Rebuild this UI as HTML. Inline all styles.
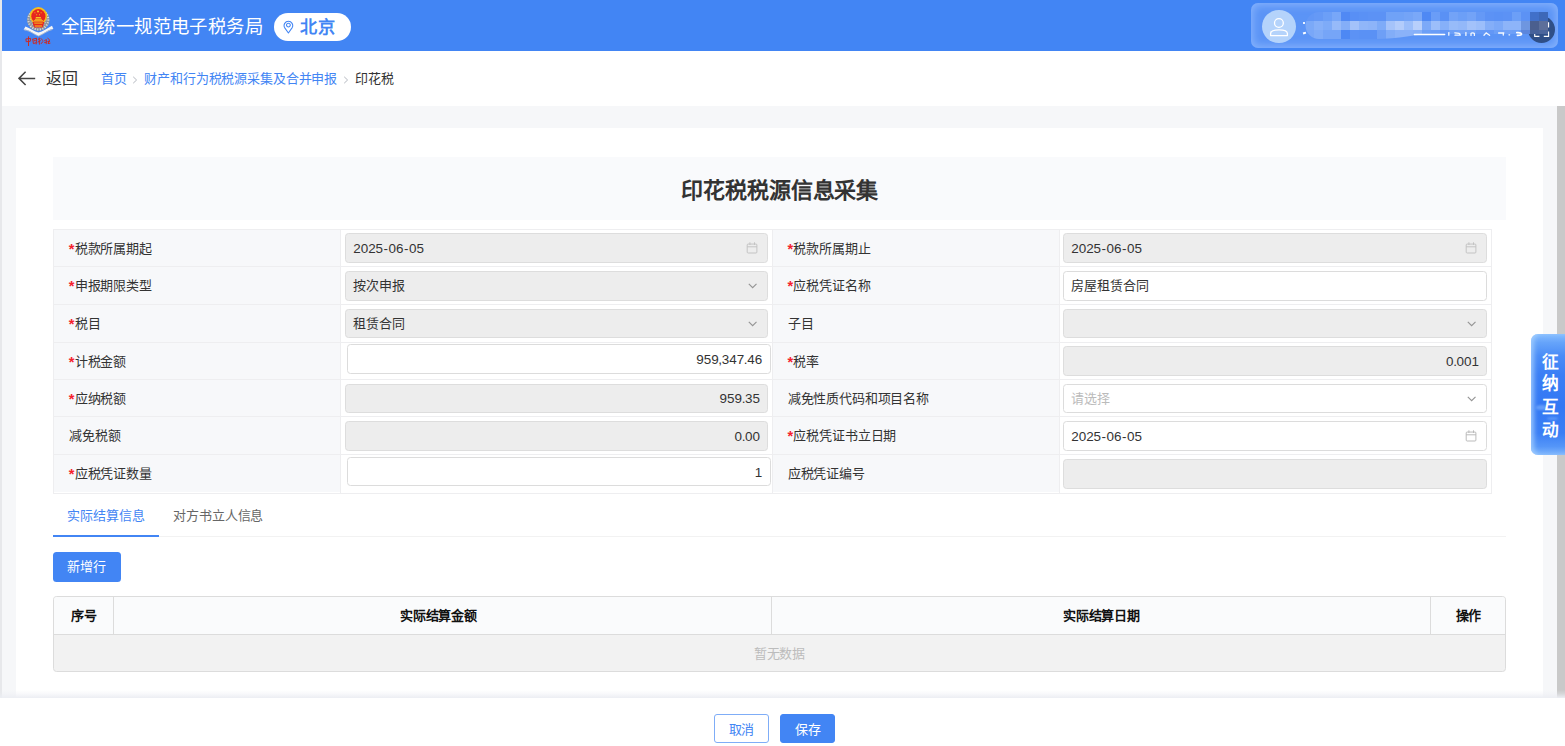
<!DOCTYPE html>
<html lang="zh-CN">
<head>
<meta charset="utf-8">
<title>印花税税源信息采集</title>
<style>
*{box-sizing:border-box;margin:0;padding:0}
html,body{width:1565px;height:746px;overflow:hidden;background:#f6f7f9;font-family:"Liberation Sans",sans-serif;color:#333;font-size:13px;letter-spacing:-.15px}
.abs{position:absolute}
#hdr{position:absolute;left:0;top:0;width:1565px;height:51px;background:#4285f4}
#lstrip{position:absolute;left:0;top:0;width:2px;height:746px;background:#e7e8eb;z-index:5}
#sitename{position:absolute;left:60.7px;top:15.2px;height:24px;line-height:24px;font-size:18.4px;letter-spacing:.4px;color:#fff;white-space:nowrap}
#pill{position:absolute;left:273.6px;top:12.9px;width:77.4px;height:28.2px;border-radius:14.1px;background:#fff}
#pill span{position:absolute;left:26.6px;top:3.3px;line-height:23px;font-size:17.2px;letter-spacing:1.1px;font-weight:bold;color:#4285f4;white-space:nowrap}
#ubox{position:absolute;left:1251px;top:3px;width:307px;height:45px;border-radius:7px;background:#5b94f6;box-shadow:inset 0 0 9px 2px rgba(150,190,255,.75)}
#avatar{position:absolute;left:1262px;top:9.6px;width:34px;height:33.3px;border-radius:50%;background:#b4d3fb}
#dark{position:absolute;left:1528px;top:15.8px;width:27px;height:27px;border-radius:50%;background:#2f4f87}
#bar{position:absolute;left:0;top:51px;width:1565px;height:55px;background:#fff}
#back{position:absolute;left:45.8px;top:68.2px;line-height:22px;font-size:16px;letter-spacing:.1px;color:#333;white-space:nowrap}
.bc{position:absolute;top:70.3px;line-height:18px;font-size:13px;letter-spacing:-.15px;white-space:nowrap}
#sb{position:absolute;left:1557px;top:106px;width:8px;height:640px;background:#c9c9c9}
#card{position:absolute;left:16px;top:128px;width:1526.5px;height:620px;background:#fff}
#tbg{position:absolute;left:53px;top:157px;width:1452.5px;height:63px;background:#f9fafc}
#title{position:absolute;left:53px;top:175.6px;width:1452.5px;text-align:center;font-size:22px;line-height:30px;font-weight:bold;color:#333;letter-spacing:-.1px;padding-left:1px}
/* form grid */
.lab{position:absolute;background:#f7f8fa;white-space:nowrap;font-size:13px;letter-spacing:-.15px;color:#333}
.lab i{font-style:normal;color:#f5222d;margin-right:.5px;font-size:14.6px;font-weight:bold;position:relative;top:1.2px;margin-left:-.3px;display:inline-block;height:10px;line-height:10px}
.inp{position:absolute;border:1px solid #dcdcdc;border-radius:3.5px;background:#fff;white-space:nowrap;color:#333}
.inp.dis{background:#ededed;border-color:#dddddd}
.inp span{position:absolute;top:0}
.inp span.n{font-size:13.45px;letter-spacing:0;top:1.3px}
.inp span.c{font-size:13px;letter-spacing:-.15px}
.inp b{font-weight:normal}
.inp b.hy{padding:0 .52px}
.inp b.cm{margin:0 -.35px}
.inp svg{position:absolute}
/* tabs */
.tab{position:absolute;top:506.8px;line-height:18px;white-space:nowrap}
#tabline{position:absolute;left:53px;top:536px;width:1452.5px;height:1px;background:#f2f2f2}
#tabact{position:absolute;left:53px;top:534.6px;width:106px;height:2px;background:#4285f4}
#addbtn{position:absolute;left:53px;top:552.3px;width:67.7px;height:29.5px;border-radius:3.5px;background:#4285f4;color:#fff;line-height:29.9px;text-align:center;padding-right:1.4px}
/* data table */
#dt{position:absolute;left:53.4px;top:596.2px;width:1452.2px;height:75.5px;border:1px solid #dcdcdc;border-radius:3.5px;background:#f2f2f2;overflow:hidden}
#dth{position:absolute;left:0;top:0;width:100%;height:37.7px;background:#fafbfc;border-bottom:1px solid #dcdcdc}
.th{position:absolute;top:0;height:36.7px;line-height:37.6px;text-align:center;font-weight:bold;color:#111}
.dv{position:absolute;top:0;width:1px;height:36.7px;background:#dcdcdc}
#nodata{position:absolute;left:0;top:38.5px;width:100%;text-align:center;line-height:36px;color:#bcbcbc}
/* footer */
#foot{position:absolute;left:0;top:698px;width:1565px;height:48px;background:#fff;z-index:6}
#foot:before{content:"";position:absolute;left:0;top:-8px;width:100%;height:8px;background:linear-gradient(180deg,rgba(236,238,243,0) 0%,rgba(236,238,243,.35) 45%,rgba(236,238,243,1) 100%)}
.fbtn{position:absolute;top:16px;height:29px;border-radius:3px;line-height:29.8px;text-align:center;border:1px solid #4285f4}
#fl{position:absolute;left:1531px;top:334px;width:34px;height:121px;border-radius:7px 0 0 7px;z-index:7;overflow:hidden;
 background:linear-gradient(180deg,#86bdff 0%,#66a4fa 7%,#4a8cf7 18%,#3a7ef5 34%,#3378f4 60%,#3a7ef5 82%,#5596f8 93%,#7fb6fd 100%);
 box-shadow:inset 4px 0 5px -1px rgba(165,208,255,.85)}
#fl:before{content:"";position:absolute;left:5px;top:70.5px;width:11px;height:5.5px;border-radius:50%;background:rgba(140,190,255,.55);filter:blur(1px)}
#fl:after{content:"";position:absolute;left:16px;top:82.5px;width:11px;height:3.6px;border-radius:50%;background:rgba(140,190,255,.4);filter:blur(1px)}
#fl span{position:absolute;left:10.1px;width:18px;text-align:center;font-size:16.7px;letter-spacing:0;font-weight:bold;color:#fff;line-height:22px}
</style>
</head>
<body>
<div id="hdr"></div>
<div id="bar"></div>
<div id="sb"></div>
<div id="card"></div>
<div id="lstrip"></div>

<!-- header content -->
<svg class="abs" id="logo" style="left:22px;top:5px" width="34" height="43" viewBox="0 0 34 43">
  <defs><clipPath id="ec"><rect x="0" y="0" width="34" height="19.6"/></clipPath></defs>
  <circle cx="16.3" cy="14.6" r="11.2" fill="#8e939b"/>
  <circle cx="16.3" cy="14.6" r="10" fill="none" stroke="#d9dbdf" stroke-width="2" stroke-dasharray="1.1 1.5"/><circle cx="16.3" cy="14.6" r="7.6" fill="none" stroke="#c4c7cc" stroke-width="1.2" stroke-dasharray=".9 1.7"/>
  <path d="M12.6 24.4 L16.4 27.6 L20.2 24.4 L20.2 25.6 L16.4 28.4 L12.6 25.6 Z" fill="#4d86ee"/>
  <path d="M3.4 21.4 C2.8 22.6 2.2 23.6 1.6 24.6 C4.4 24.6 7 25.6 9.6 27.2 C12 28.6 14.2 30 16.5 30.9 C18.8 30 21 28.6 23.4 27.2 C26 25.6 28.6 24.4 31.4 23.8 C30.8 22.8 30.4 21.8 30 20.8 C27.6 22 25.4 23.4 23 24.8 C20.8 26 18.6 27 16.5 27.6 C14.4 27 12.2 26 10 24.8 C7.8 23.6 5.8 22.4 3.4 21.4 Z" fill="#f4f5f7"/>
  <path d="M2.4 25 C5 25.2 7.4 26.2 9.8 27.6 C12.2 29 14.2 30.2 16.5 31 C18.8 30.2 20.8 29 23.2 27.6 C25.6 26.2 28 25 30.6 24.4" fill="none" stroke="#bfc3c9" stroke-width=".8"/>
  <g clip-path="url(#ec)">
    <circle cx="16.4" cy="10.8" r="8.7" fill="#f5c11b"/>
    <circle cx="16.4" cy="11.2" r="7.1" fill="#e7261f"/>
  </g>
  <path d="M10.6 17 H22.2 L21.6 19.8 L20.6 22.4 H12.2 L11.2 19.8 Z" fill="#e7261f"/>
  <path d="M13.8 12.1 H18.9 V13.2 H13.8 Z M11.9 15.3 H20.9 L21.4 16.6 H11.4 Z M13.2 13.8 H19.6 L20 14.8 H12.8 Z M12.8 20.6 H20 V21.5 H12.8 Z" fill="#f7c623"/>
  <path d="M12 17.6 H20.8 L20.5 18.7 H12.3 Z" fill="#f2a11f"/>
  <circle cx="16" cy="6.5" r="1.05" fill="#f7c623"/><circle cx="12.9" cy="7.7" r=".55" fill="#f7c623"/><circle cx="19.1" cy="7.7" r=".55" fill="#f7c623"/><circle cx="14.7" cy="9.7" r=".55" fill="#f7c623"/><circle cx="17.5" cy="9.7" r=".55" fill="#f7c623"/>
  <g fill="none" stroke="#d0261d" stroke-width=".95" stroke-linecap="round" stroke-linejoin="round">
    <path d="M4.3 33.9 L8.6 33.4 L8.3 36.3 L4.6 36.7 Z M6.5 31.8 L6.5 40.6"/>
    <path d="M10.6 34.2 L14.6 33.2 L14.2 39 M10.8 34.4 L11.4 38.6 L13.8 37.8 M12 35.8 L13.4 35.4"/>
    <path d="M16.2 34.4 L18 33.6 M17.2 33 L17.4 39.2 M16 37 L18.4 35.8 M19.4 33.8 L20.6 35.4 M19.2 38.6 L20.8 36.6"/>
    <path d="M22.6 35.6 L24.4 34.6 L24.2 38.8 M22.6 37.6 L25.2 36.8 M25.8 33.4 L27.6 34.8 L26 38.6 L28 38.2 M26.2 36.4 L27.6 36.6"/>
  </g>
</svg>
<div id="sitename">全国统一规范电子税务局</div>
<div id="pill">
  <svg class="abs" style="left:9.4px;top:6.9px" width="11" height="14" viewBox="0 0 11 14"><path d="M5.4 13 L1.6 7.6 A4.3 4.3 0 1 1 9.2 7.6 Z" fill="none" stroke="#4285f4" stroke-width="1.05" stroke-linejoin="round"/><circle cx="5.4" cy="5.1" r="1.9" fill="none" stroke="#4285f4" stroke-width="1.05"/></svg>
  <span>北京</span>
</div>
<div id="ubox"></div>
<div id="avatar">
  <svg class="abs" style="left:0;top:-.6px" width="34" height="34" viewBox="0 0 34 34"><circle cx="16.9" cy="14" r="4.4" fill="none" stroke="#fff" stroke-width="1.3"/><path d="M8.6 26.6 L8.6 24.6 C8.6 22 12 20.8 17 20.8 C22 20.8 25.4 22 25.4 24.6 L25.4 26.6 Z" fill="none" stroke="#fff" stroke-width="1.3" stroke-linejoin="round"/></svg>
</div>
<div id="dark">
  <svg class="abs" style="left:5.6px;top:5.8px" width="16" height="16" viewBox="0 0 16 16" fill="none" stroke="#fff" stroke-width="1.1"><path d="M9.8 .9 L14.6 .9 L14.6 5.6 M14.6 9.6 L14.6 14.4 L9.8 14.4 M5.4 14.4 L.7 14.4 L.7 9.6 M4.6 11.4 L7.6 8.4 L10.4 11"/></svg>
</div>
<svg class="abs" style="left:1305px;top:11.9px" width="243" height="28" viewBox="0 0 243 28"><defs><clipPath id="mc"><path d="M14 0 H243 V22 H130 C110 22 95 27 70 27 H14 A13.5 13.5 0 0 1 14 0 Z"/></clipPath></defs><g clip-path="url(#mc)" shape-rendering="crispEdges">
<rect x="0" y="0" width="9" height="9.2" fill="#6297f6"/>
<rect x="9" y="0" width="9" height="9.2" fill="#6599f6"/>
<rect x="18" y="0" width="9" height="9.2" fill="#6c9ff7"/>
<rect x="27" y="0" width="9" height="9.2" fill="#78a7f8"/>
<rect x="36" y="0" width="9" height="9.2" fill="#5089f4"/>
<rect x="45" y="0" width="9" height="9.2" fill="#588ff5"/>
<rect x="54" y="0" width="9" height="9.2" fill="#5a91f5"/>
<rect x="63" y="0" width="9" height="9.2" fill="#5c92f5"/>
<rect x="72" y="0" width="9" height="9.2" fill="#5c92f5"/>
<rect x="81" y="0" width="9" height="9.2" fill="#70a2f7"/>
<rect x="90" y="0" width="9" height="9.2" fill="#70a2f7"/>
<rect x="99" y="0" width="9" height="9.2" fill="#74a4f7"/>
<rect x="108" y="0" width="9" height="9.2" fill="#7aa8f8"/>
<rect x="117" y="0" width="9" height="9.2" fill="#4f89f4"/>
<rect x="126" y="0" width="9" height="9.2" fill="#6a9df7"/>
<rect x="135" y="0" width="9" height="9.2" fill="#5a91f5"/>
<rect x="144" y="0" width="9" height="9.2" fill="#73a3f7"/>
<rect x="153" y="0" width="9" height="9.2" fill="#6c9ff7"/>
<rect x="162" y="0" width="9" height="9.2" fill="#73a3f7"/>
<rect x="171" y="0" width="9" height="9.2" fill="#6599f6"/>
<rect x="180" y="0" width="9" height="9.2" fill="#5c92f5"/>
<rect x="189" y="0" width="9" height="9.2" fill="#5a91f5"/>
<rect x="198" y="0" width="9" height="9.2" fill="#5c92f5"/>
<rect x="207" y="0" width="9" height="9.2" fill="#6c9ff7"/>
<rect x="216" y="0" width="9" height="9.2" fill="#5c92f5"/>
<rect x="225" y="0" width="9" height="9.2" fill="#4170c9"/>
<rect x="234" y="0" width="9" height="9.2" fill="#3d68b8"/>
<rect x="0" y="9.2" width="9" height="9" fill="#7ba9f8"/>
<rect x="9" y="9.2" width="9" height="9" fill="#86b0f9"/>
<rect x="18" y="9.2" width="9" height="9" fill="#7eabf8"/>
<rect x="27" y="9.2" width="9" height="9" fill="#96baf9"/>
<rect x="36" y="9.2" width="9" height="9" fill="#84aef8"/>
<rect x="45" y="9.2" width="9" height="9" fill="#a3c2fa"/>
<rect x="54" y="9.2" width="9" height="9" fill="#90b6f9"/>
<rect x="63" y="9.2" width="9" height="9" fill="#8db4f9"/>
<rect x="72" y="9.2" width="9" height="9" fill="#7eabf8"/>
<rect x="81" y="9.2" width="9" height="9" fill="#a5c3fa"/>
<rect x="90" y="9.2" width="9" height="9" fill="#b3ccfb"/>
<rect x="99" y="9.2" width="9" height="9" fill="#9cbefa"/>
<rect x="108" y="9.2" width="9" height="9" fill="#b8cffb"/>
<rect x="117" y="9.2" width="9" height="9" fill="#7ca9f8"/>
<rect x="126" y="9.2" width="9" height="9" fill="#9cbefa"/>
<rect x="135" y="9.2" width="9" height="9" fill="#86b0f9"/>
<rect x="144" y="9.2" width="9" height="9" fill="#97bbf9"/>
<rect x="153" y="9.2" width="9" height="9" fill="#93b8f9"/>
<rect x="162" y="9.2" width="9" height="9" fill="#a3c2fa"/>
<rect x="171" y="9.2" width="9" height="9" fill="#9cbefa"/>
<rect x="180" y="9.2" width="9" height="9" fill="#84aef8"/>
<rect x="189" y="9.2" width="9" height="9" fill="#7ca9f8"/>
<rect x="198" y="9.2" width="9" height="9" fill="#8db4f9"/>
<rect x="207" y="9.2" width="9" height="9" fill="#8db4f9"/>
<rect x="216" y="9.2" width="9" height="9" fill="#6e96e0"/>
<rect x="225" y="9.2" width="9" height="9" fill="#4b5f8e"/>
<rect x="234" y="9.2" width="9" height="9" fill="#5d6f9a"/>
<rect x="0" y="18.2" width="9" height="9.8" fill="#79a7f8"/>
<rect x="9" y="18.2" width="9" height="9.8" fill="#80acf8"/>
<rect x="18" y="18.2" width="9" height="9.8" fill="#76a5f7"/>
<rect x="27" y="18.2" width="9" height="9.8" fill="#76a5f7"/>
<rect x="36" y="18.2" width="9" height="9.8" fill="#4d88f4"/>
<rect x="45" y="18.2" width="9" height="9.8" fill="#5c92f5"/>
<rect x="54" y="18.2" width="9" height="9.8" fill="#5a91f5"/>
<rect x="63" y="18.2" width="9" height="9.8" fill="#5a91f5"/>
<rect x="72" y="18.2" width="9" height="9.8" fill="#6e9ff6"/>
<rect x="81" y="18.2" width="9" height="9.8" fill="#82adf8"/>
<rect x="90" y="18.2" width="9" height="9.8" fill="#8ab2f9"/>
<rect x="99" y="18.2" width="9" height="9.8" fill="#8ab2f9"/>
<rect x="108" y="18.2" width="9" height="9.8" fill="#86b0f9"/>
<rect x="117" y="18.2" width="9" height="9.8" fill="#6c9ff7"/>
<rect x="126" y="18.2" width="9" height="9.8" fill="#6a9df7"/>
<rect x="135" y="18.2" width="9" height="9.8" fill="#6397f6"/>
<rect x="144" y="18.2" width="9" height="9.8" fill="#6c9ff7"/>
<rect x="153" y="18.2" width="9" height="9.8" fill="#6fa0f7"/>
<rect x="162" y="18.2" width="9" height="9.8" fill="#6c9ff7"/>
<rect x="171" y="18.2" width="9" height="9.8" fill="#6599f6"/>
<rect x="180" y="18.2" width="9" height="9.8" fill="#6397f6"/>
<rect x="189" y="18.2" width="9" height="9.8" fill="#6c9ff7"/>
<rect x="198" y="18.2" width="9" height="9.8" fill="#6fa0f7"/>
<rect x="207" y="18.2" width="9" height="9.8" fill="#6c9ff7"/>
<rect x="216" y="18.2" width="9" height="9.8" fill="#5b86dd"/>
<rect x="225" y="18.2" width="9" height="9.8" fill="#46629b"/>
<rect x="234" y="18.2" width="9" height="9.8" fill="#4c669c"/>
</g></svg>
<svg class="abs" style="left:1410px;top:30px" width="120" height="8" viewBox="0 0 120 8" fill="none" stroke="#fff" stroke-linecap="round"><path d="M4.4 4.6 H34.6" stroke-width="1.5"/><g stroke-width="1.3" opacity=".92"><path d="M38.8 2.6 V5.2"/><path d="M44.8 2.8 C48.8 2.8 50.4 3.6 50.2 5.2 H45"/><path d="M55.9 2.6 V5.4"/><path d="M61 5.4 V3.4 C61.6 2.6 63.8 2.6 64.4 3.6 V5.4"/><path d="M74 5.2 L76.2 2.9 L79.6 5.3"/><path d="M88.6 3 H93.6 L93.2 5"/><path d="M99 4.8 H99.6"/></g><path d="M106.8 2.6 C112.6 2.2 113.4 5.6 107.4 5.4" stroke-width="1.7"/></svg>
<div class="abs" style="left:1303px;top:21.6px;width:2px;height:2px;background:#eaf2ff"></div><div class="abs" style="left:1302.6px;top:31.5px;width:3.4px;height:2.2px;background:#fff;transform:rotate(-18deg)"></div>

<!-- breadcrumb bar -->
<svg class="abs" style="left:18px;top:71px" width="18" height="15" viewBox="0 0 18 15"><path d="M7.6 .8 L1 7.4 L7.6 14 M1 7.4 L17.2 7.4" fill="none" stroke="#444" stroke-width="1.5"/></svg>
<div id="back">返回</div>
<div class="bc" style="left:100.8px;color:#4285f4">首页</div>
<svg class="abs" style="left:131.5px;top:75.5px" width="6" height="8" viewBox="0 0 6 8"><path d="M1.2 .8 L4.6 4 L1.2 7.2" fill="none" stroke="#b4b8bf" stroke-width="1"/></svg>
<div class="bc" style="left:144.4px;color:#4285f4">财产和行为税税源采集及合并申报</div>
<svg class="abs" style="left:343px;top:75.5px" width="6" height="8" viewBox="0 0 6 8"><path d="M1.2 .8 L4.6 4 L1.2 7.2" fill="none" stroke="#b4b8bf" stroke-width="1"/></svg>
<div class="bc" style="left:355.2px;color:#333">印花税</div>

<!-- title -->
<div id="tbg"></div>
<div id="title">印花税税源信息采集</div>

<!-- form grid -->
<div class="abs" style="left:53px;top:229px;width:1439px;height:265px;border:1px solid #eeeef0;background:#fff"></div>
<div class="lab" style="left:54px;top:230px;width:286px;height:36px;line-height:37.2px;padding-left:15.0px"><i>*</i>税款所属期起</div>
<div class="lab" style="left:773px;top:230px;width:286px;height:36px;line-height:37.2px;padding-left:14.7px"><i>*</i>税款所属期止</div>
<div class="lab" style="left:54px;top:267px;width:286px;height:37px;line-height:38.2px;padding-left:15.0px"><i>*</i>申报期限类型</div>
<div class="lab" style="left:773px;top:267px;width:286px;height:37px;line-height:38.2px;padding-left:14.7px"><i>*</i>应税凭证名称</div>
<div class="lab" style="left:54px;top:305px;width:286px;height:37px;line-height:38.2px;padding-left:15.0px"><i>*</i>税目</div>
<div class="lab" style="left:773px;top:305px;width:286px;height:37px;line-height:38.2px;padding-left:14.7px">子目</div>
<div class="lab" style="left:54px;top:343px;width:286px;height:36px;line-height:37.2px;padding-left:15.0px"><i>*</i>计税金额</div>
<div class="lab" style="left:773px;top:343px;width:286px;height:36px;line-height:37.2px;padding-left:14.7px"><i>*</i>税率</div>
<div class="lab" style="left:54px;top:380px;width:286px;height:36px;line-height:37.2px;padding-left:15.0px"><i>*</i>应纳税额</div>
<div class="lab" style="left:773px;top:380px;width:286px;height:36px;line-height:37.2px;padding-left:14.7px">减免性质代码和项目名称</div>
<div class="lab" style="left:54px;top:417px;width:286px;height:37px;line-height:38.2px;padding-left:15.0px">减免税额</div>
<div class="lab" style="left:773px;top:417px;width:286px;height:37px;line-height:38.2px;padding-left:14.7px"><i>*</i>应税凭证书立日期</div>
<div class="lab" style="left:54px;top:455px;width:286px;height:37px;line-height:38.2px;padding-left:15.0px"><i>*</i>应税凭证数量</div>
<div class="lab" style="left:773px;top:455px;width:286px;height:37px;line-height:38.2px;padding-left:14.7px">应税凭证编号</div>
<div class="abs" style="left:54px;top:266px;width:1437px;height:1px;background:#eeeef0"></div>
<div class="abs" style="left:54px;top:304px;width:1437px;height:1px;background:#eeeef0"></div>
<div class="abs" style="left:54px;top:342px;width:1437px;height:1px;background:#eeeef0"></div>
<div class="abs" style="left:54px;top:379px;width:1437px;height:1px;background:#eeeef0"></div>
<div class="abs" style="left:54px;top:416px;width:1437px;height:1px;background:#eeeef0"></div>
<div class="abs" style="left:54px;top:454px;width:1437px;height:1px;background:#eeeef0"></div>
<div class="abs" style="left:340px;top:230px;width:1px;height:263px;background:#eeeef0"></div>
<div class="abs" style="left:772px;top:230px;width:1px;height:263px;background:#eeeef0"></div>
<div class="abs" style="left:1059px;top:230px;width:1px;height:263px;background:#eeeef0"></div>
<div class="inp dis" style="left:345px;top:233px;width:423px;height:30px;line-height:28px"><span class="n" style="left:7.2px">2025<b class="hy">-</b>06<b class="hy">-</b>05</span><svg style="right:8.6px;top:7.95px" width="12" height="12" viewBox="0 0 12 12" fill="none" stroke="#c2c2c2" stroke-width=".95"><rect x="1.2" y="2.05" width="9.7" height="8.95" rx=".9"/><path d="M1.2 4.8 H10.9 M3.9 .3 V2.9 M8.5 .3 V2.9"/></svg></div>
<div class="inp dis" style="left:1063px;top:233px;width:424px;height:30px;line-height:28px"><span class="n" style="left:7.2px">2025<b class="hy">-</b>06<b class="hy">-</b>05</span><svg style="right:8.6px;top:7.95px" width="12" height="12" viewBox="0 0 12 12" fill="none" stroke="#c2c2c2" stroke-width=".95"><rect x="1.2" y="2.05" width="9.7" height="8.95" rx=".9"/><path d="M1.2 4.8 H10.9 M3.9 .3 V2.9 M8.5 .3 V2.9"/></svg></div>
<div class="inp dis" style="left:345px;top:271px;width:423px;height:30px;line-height:28px"><span class="c" style="left:7.4px">按次申报</span><svg style="right:9px;top:11.05px" width="10" height="7" viewBox="0 0 10 7" fill="none" stroke="#959595" stroke-width="1.15"><path d="M.8 .9 L4.65 4.75 L8.5 .9"/></svg></div>
<div class="inp" style="left:1063px;top:271px;width:424px;height:30px;line-height:28px"><span class="c" style="left:7.4px">房屋租赁合同</span></div>
<div class="inp dis" style="left:345px;top:309px;width:423px;height:29px;line-height:27px"><span class="c" style="left:7.4px">租赁合同</span><svg style="right:9px;top:10.55px" width="10" height="7" viewBox="0 0 10 7" fill="none" stroke="#959595" stroke-width="1.15"><path d="M.8 .9 L4.65 4.75 L8.5 .9"/></svg></div>
<div class="inp dis" style="left:1063px;top:309px;width:424px;height:29px;line-height:27px"><span class="c" style="left:7.4px"></span><svg style="right:9px;top:10.55px" width="10" height="7" viewBox="0 0 10 7" fill="none" stroke="#959595" stroke-width="1.15"><path d="M.8 .9 L4.65 4.75 L8.5 .9"/></svg></div>
<div class="inp num" style="left:347px;top:344px;width:424px;height:30px;line-height:28px"><span class="n" style="right:7.9px">959<b class="cm">,</b>347<b class="cm">.</b>46</span></div>
<div class="inp dis" style="left:1063px;top:346px;width:424px;height:30px;line-height:28px"><span class="n" style="right:7px">0<b class="cm">.</b>001</span></div>
<div class="inp dis" style="left:345px;top:384px;width:423px;height:29px;line-height:27px"><span class="n" style="right:7px;top:.2px">959<b class="cm">.</b>35</span></div>
<div class="inp" style="left:1063px;top:384px;width:424px;height:29px;line-height:27px"><span class="c" style="left:7.4px;color:#bbb">请选择</span><svg style="right:9px;top:10.55px" width="10" height="7" viewBox="0 0 10 7" fill="none" stroke="#959595" stroke-width="1.15"><path d="M.8 .9 L4.65 4.75 L8.5 .9"/></svg></div>
<div class="inp dis" style="left:345px;top:421px;width:423px;height:30px;line-height:28px"><span class="n" style="right:7px">0<b class="cm">.</b>00</span></div>
<div class="inp" style="left:1063px;top:421px;width:424px;height:30px;line-height:28px"><span class="n" style="left:7.2px">2025<b class="hy">-</b>06<b class="hy">-</b>05</span><svg style="right:8.6px;top:7.95px" width="12" height="12" viewBox="0 0 12 12" fill="none" stroke="#b7b7b7" stroke-width=".95"><rect x="1.2" y="2.05" width="9.7" height="8.95" rx=".9"/><path d="M1.2 4.8 H10.9 M3.9 .3 V2.9 M8.5 .3 V2.9"/></svg></div>
<div class="inp num" style="left:347px;top:457px;width:424px;height:29px;line-height:27px"><span class="n" style="right:7.9px">1</span></div>
<div class="inp dis" style="left:1063px;top:459px;width:424px;height:30px;line-height:28px"></div>

<!-- tabs -->
<div id="tabline"></div>
<div id="tabact"></div>
<div class="tab" style="left:67.4px;color:#4285f4">实际结算信息</div>
<div class="tab" style="left:173.4px;color:#666">对方书立人信息</div>
<div id="addbtn">新增行</div>

<!-- data table -->
<div id="dt">
  <div id="dth">
    <div class="th" style="left:0;width:59.5px">序号</div>
    <div class="dv" style="left:59px"></div>
    <div class="th" style="left:60px;width:657px;padding-right:9px">实际结算金额</div>
    <div class="dv" style="left:717px"></div>
    <div class="th" style="left:718px;width:658px">实际结算日期</div>
    <div class="dv" style="left:1376px"></div>
    <div class="th" style="left:1377px;width:74px">操作</div>
  </div>
  <div id="nodata">暂无数据</div>
</div>

<!-- floating -->
<div id="fl"><span style="top:17.5px">征</span><span style="top:39.3px">纳</span><span style="top:63.2px">互</span><span style="top:85.6px">动</span></div>

<!-- footer -->
<div id="foot">
  <div class="fbtn" style="left:714px;width:55px;background:#fff;color:#4285f4;border-color:#7fadf7">取消</div>
  <div class="fbtn" style="left:780px;width:55.4px;background:#4285f4;color:#fff">保存</div>
</div>
</body>
</html>
